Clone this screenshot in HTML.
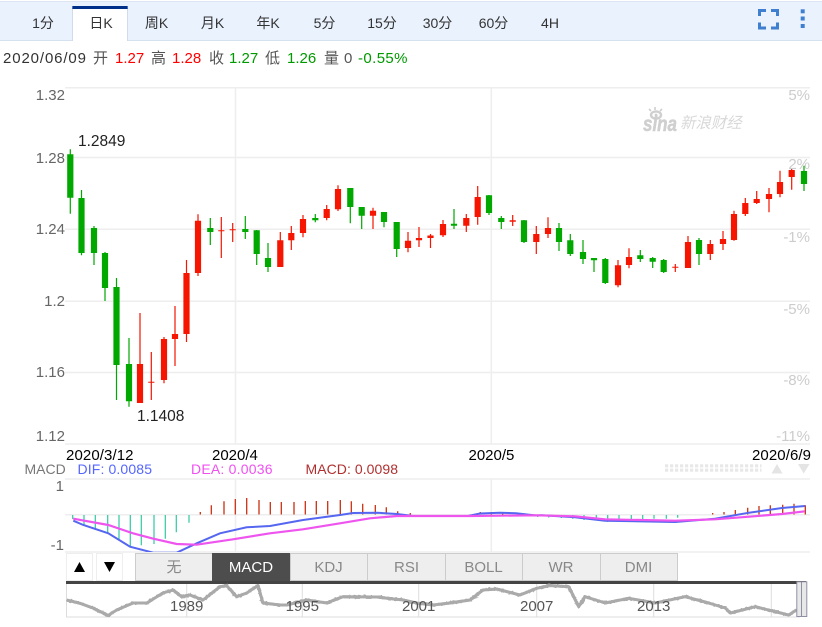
<!DOCTYPE html>
<html><head><meta charset="utf-8"><title>K</title>
<style>
html,body{margin:0;padding:0;background:#fff;width:822px;height:627px;overflow:hidden}
svg{display:block}
text{font-family:"Liberation Sans","WenQuanYi Zen Hei","Noto Sans CJK SC",sans-serif;font-size:14px}
.f15 text{font-size:15px}
.f155 text{font-size:15.5px}
</style></head><body>
<svg width="822" height="627" viewBox="0 0 822 627" xmlns="http://www.w3.org/2000/svg">
<defs>
<filter id="n" x="-2%" y="-20%" width="104%" height="140%"><feTurbulence type="fractalNoise" baseFrequency="0.35" numOctaves="2" seed="4"/><feDisplacementMap in="SourceGraphic" scale="3" xChannelSelector="R" yChannelSelector="G"/></filter>
<clipPath id="mc"><rect x="65" y="480" width="745" height="72"/></clipPath>
</defs>
<!-- toolbar -->
<rect x="0" y="1" width="822" height="40" fill="#eaf2fd"/>
<rect x="0" y="1" width="822" height="1" fill="#dce5f1"/>
<rect x="0" y="40" width="822" height="1" fill="#d6e1ef"/>
<rect x="72" y="6" width="56" height="35" fill="#fff"/>
<rect x="72" y="8" width="1" height="33" fill="#d0dcec"/><rect x="127" y="8" width="1" height="33" fill="#d0dcec"/>
<rect x="72.3" y="6" width="55.4" height="3" fill="#00308a"/>
<g fill="#333" text-anchor="middle">
<text x="43" y="28">1分</text><text x="101" y="28">日K</text><text x="156.5" y="28">周K</text><text x="212.5" y="28">月K</text><text x="268" y="28">年K</text><text x="324.5" y="28">5分</text><text x="382" y="28">15分</text><text x="437.5" y="28">30分</text><text x="493.5" y="28">60分</text><text x="550" y="28">4H</text>
</g>
<path d="M759.5 16V10.5H766M771 10.5H777.5V16M759.5 22.5V28H766M771 28H777.5V22.5" fill="none" stroke="#3f7fd0" stroke-width="3"/>
<g fill="#3f7fd0"><rect x="800.7" y="9.3" width="4" height="4"/><rect x="800.7" y="16.5" width="4" height="4"/><rect x="800.7" y="24" width="4" height="4"/></g>
<!-- info row -->
<g class="f15">
<text x="3" y="63" fill="#333" textLength="83">2020/06/09</text>
<text x="93" y="63" fill="#555">开</text><text x="115" y="63" fill="#f00">1.27</text>
<text x="151" y="63" fill="#555">高</text><text x="172" y="63" fill="#f00">1.28</text>
<text x="209" y="63" fill="#555">收</text><text x="229" y="63" fill="#090">1.27</text>
<text x="265" y="63" fill="#555">低</text><text x="287" y="63" fill="#090">1.26</text>
<text x="324" y="63" fill="#555">量</text><text x="344" y="63" fill="#555">0</text>
<text x="358" y="63" fill="#090" textLength="49.5">-0.55%</text>
</g>
<!-- grid -->
<g stroke="#eee" stroke-width="1.5" fill="none">
<path d="M65 87.7H810M65 157.5H810M65 229.3H810M65 301.3H810M65 372.5H810M65 444H810M65 479H810M65 514.7H810M65 552H810"/>
<path d="M235.5 88V444M235.5 479V552M491.3 88V444M491.3 479V552"/>
</g>
<!-- watermark -->
<g fill="#cfcfcf">
<text x="643" y="131" style="font-size:21px;font-weight:bold;font-style:italic" stroke="#cfcfcf" stroke-width=".5" textLength="34" lengthAdjust="spacingAndGlyphs">sina</text>
<text x="680" y="128" fill="#d8d8d8" style="font-size:15.4px;font-style:italic">新浪财经</text>
<ellipse cx="656" cy="115" rx="5" ry="3.6" fill="none" stroke="#cfcfcf" stroke-width="2.4"/>
<circle cx="656" cy="115" r="1.4"/>
<path d="M651 111l-2-2M655 110v-3M660 111l2-2" stroke="#cfcfcf" stroke-width="1.6"/>
</g>
<!-- axis labels -->
<g fill="#666" text-anchor="end" class="f15">
<text x="65" y="100">1.32</text><text x="65" y="163">1.28</text><text x="65" y="234">1.24</text><text x="65" y="306">1.2</text><text x="65" y="377">1.16</text><text x="65" y="441">1.12</text>
<text x="64" y="491">1</text><text x="64" y="550">-1</text>
</g>
<g fill="#ccc" text-anchor="end" class="f15">
<text x="810" y="100">5%</text><text x="810" y="169">2%</text><text x="810" y="242">-1%</text><text x="810" y="314">-5%</text><text x="810" y="385">-8%</text><text x="810" y="441">-11%</text>
</g>
<!-- green candles -->
<path fill="none" stroke="#00a800" stroke-width="1.2" d="M70.3 149.3V213.7M81.5 190V255.3M94 226V265M105 252V301M116.5 278V400M129 338V406.7M210.3 218V245M245.3 216V239M256.7 230V265M268 243V272M315.3 214V222.3M350.3 188V223.3M361.7 207V229M384 212V227.3M396.7 222V257M454 209V229M489 195V215M501.3 216V229M524 220V243M559 223V251M570.3 234V256M583 240V264M594 258V272M605.3 258V284M640.3 250V262M652.7 257V268M663.7 259V273M699 238V265M804 165.7V191"/>
<path fill="none" stroke="#00a800" stroke-width="6.2" d="M70.3 154.3V197.7M81.5 198V253M94 228V253M105 253V288M116.5 287V365M129 364V401.3M210.3 228V232M245.3 229V232M256.7 230.3V254M268 258V267M315.3 218V220.3M350.3 188V207M361.7 207V215.7M384 212V222M396.7 222V249M454 223.7V225.7M489 195.3V213M501.3 218V222M524 220.3V242M559 228V242M570.3 240.3V254M583 252V259M594 258V260.3M605.3 259V283M640.3 255.3V259M652.7 258V261.7M663.7 260V272M699 240V254M804 171V184"/>
<!-- red candles -->
<path fill="none" stroke="#f51500" stroke-width="1.2" d="M140 313V403M151.3 352V400M164 337V383.3M175 306V366M186.5 260V342M198 214.3V276M221.3 217V258M232.7 223V242M280.3 232V267M291.3 226V250M303 215V237.3M326.7 205V220.3M338 185.3V211M373 207.7V229M408 232V252.3M419 227V247M430.5 234V248M443 220V237M466.3 214V232M477.7 186V224.7M512.7 215V226M536.3 226V254M548 217.3V238M618 260V287.3M629 248.3V268.3M675.3 264V272M688 236V268M710.3 240V260M723 231V250M734 210.7V240.7M745.3 198V216M756.7 191V204M769 188V212.3M780 170.7V197.3M791.7 169V189.7"/>
<path fill="none" stroke="#f51500" stroke-width="6.2" d="M140 364V403M151.3 381.7V382.7M164 339V380M175 334V339M186.5 273V334M198 220.7V273M221.3 230.3V231.3M232.7 229.3V230.3M280.3 240.3V267M291.3 233V240.3M303 219V233M326.7 209V218M338 189V209.3M373 210.7V215.7M408 240.7V248M419 238V240.3M430.5 235.5V238M443 224V235.3M466.3 218V225.7M477.7 197V217M512.7 220.3V221.7M536.3 234V242M548 228V234M618 265.3V285.3M629 257V265M675.3 266.7V267.7M688 242V268M710.3 244V254M723 239V244M734 214V240M745.3 203V214M756.7 199V203M769 194V199M780 182V194M791.7 170V177"/>
<!-- markers -->
<g fill="#222" class="f155"><text x="78" y="146">1.2849</text><text x="137" y="421">1.1408</text></g>
<!-- date labels -->
<g fill="#000" class="f15"><text x="66" y="460" textLength="67.5">2020/3/12</text><text x="212" y="460">2020/4</text><text x="468.5" y="460">2020/5</text><text x="752" y="460" textLength="59">2020/6/9</text></g>
<!-- macd legend -->
<text x="24.5" y="474" fill="#777">MACD</text>
<text x="77.5" y="474" fill="#5566ff" textLength="74.5">DIF: 0.0085</text>
<text x="191" y="474" fill="#f050f0" textLength="81.5">DEA: 0.0036</text>
<text x="305.5" y="474" fill="#b03030" textLength="92.5">MACD: 0.0098</text>
<!-- dot widget -->
<path d="M665 465.8H761.5M665 470.2H761.5" stroke="#e8e8e8" stroke-width="3.2" stroke-dasharray="3.2 1.8" fill="none"/>
<path d="M771.5 473.5L777 464L782.5 473.5ZM798 464H809.5L803.7 473.5Z" fill="#e4e4e4"/>
<!-- macd bars -->
<g clip-path="url(#mc)">
<path fill="none" stroke="#30c8a0" stroke-width="1.2" d="M72.7 515V519M84 515V525M95.3 515V528.3M107.7 515V533.3M119 515V540M130.3 515V546M141.3 515V545.3M154 515V544M165.3 515V538.7M176.3 515V532.3M189 515V522.7M526.7 515V516M537.7 515V517M548.7 515V517.5M561.3 515V518M572.7 515V518.7M584 515V520M596.3 515V520.5M607.7 515V522M619 515V521M631.3 515V520.5M642.7 515V519.5M654 515V518.7M666.3 515V518.7M677.7 515V517.7"/>
<path fill="none" stroke="#c83010" stroke-width="1.3" d="M200.3 512V514.5M211.3 505.3V514.5M224 501.3V514.5M235.3 499V514.5M246.7 498V514.5M259 500V514.5M270.3 502V514.5M281.3 502V514.5M294 502V514.5M305.3 501V514.5M316.3 501V514.5M327.7 501V514.5M340.3 500V514.5M351.3 501.3V514.5M362.7 503.7V514.5M375.3 505V514.5M386.3 507.3V514.5M397.7 511.3V514.5M410.3 513V514.5M480.3 512V514.5M491.3 512V514.5M502.7 513V514.5M712.7 513V514.5M724 512V514.5M735.3 510V514.5M747.7 507.7V514.5M759 506V514.5M770.3 505.3V514.5M782.7 504.7V514.5M794 503.7V514.5M805.3 505.3V514.5"/>
<polyline fill="none" stroke="#5566f0" stroke-width="2" points="73.3,520.7 83.3,525 108.3,533.3 130,546.7 153.3,552.7 176.7,552.7 196.7,543.3 220,533.3 246.7,527.3 270,526 303,520 340,515 353,513 377,512.7 397,514 413,516 468,516 480,513.5 500,512.7 516,513.3 536,515.5 542,515.3 575,517.3 605,520.7 675,522 715,518.7 749,512.7 782,508 805,506"/>
<polyline fill="none" stroke="#ee55ee" stroke-width="2.2" points="73.3,518.7 108.3,525 133,533.3 153.3,538.7 176.7,544 196.7,544.7 233,539.3 270,533.3 303,529.3 340,523.3 370,518.3 397,516 470,516 536,515.3 575,516.3 605,519.3 675,520.7 715,519.3 749,516.7 782,514 805,511.3"/>
</g>
<!-- buttons -->
<rect x="66.5" y="553.5" width="26" height="27" fill="#fff" stroke="#eee"/>
<rect x="96.5" y="553.5" width="26" height="27" fill="#fff" stroke="#eee"/>
<path d="M74 572H85L79.5 562Z M104 562H115L109.5 572Z" fill="#000"/>
<g stroke="#ccc" fill="#eee">
<rect x="135.5" y="553.5" width="77" height="27"/>
<rect x="212.5" y="553.5" width="78" height="27" fill="#4d4d4d" stroke="#4d4d4d"/>
<rect x="290.5" y="553.5" width="77" height="27"/>
<rect x="367.5" y="553.5" width="78" height="27"/>
<rect x="445.5" y="553.5" width="77" height="27"/>
<rect x="522.5" y="553.5" width="78" height="27"/>
<rect x="600.5" y="553.5" width="77" height="27"/>
</g>
<g text-anchor="middle" fill="#888" class="f15">
<text x="174" y="572">无</text>
<text x="251" y="572" fill="#fff">MACD</text>
<text x="328.5" y="572">KDJ</text>
<text x="406.5" y="572">RSI</text>
<text x="483.5" y="572">BOLL</text>
<text x="561" y="572">WR</text>
<text x="638.5" y="572">DMI</text>
</g>
<!-- range bar -->
<rect x="66" y="581" width="740" height="3" fill="#444"/>
<path d="M66.5 584V617H800" fill="none" stroke="#ddd" stroke-width="1"/>
<path d="M186.7 584V617M302.3 584V617M418.7 584V617M536.7 584V617M653.7 584V617M771.3 584V617" stroke="#ddd" stroke-width="1"/>
<polyline fill="none" stroke="#aaa" stroke-width="3" stroke-linejoin="round" points="66.7,600 80,603.3 93,608 108,615.5 116.7,610 133,603 146.7,603 163,593 173,590 181.7,596.7 190,595 203,600 220,586.7 226.7,585.7 236.7,596.7 246.7,593 258,585.5 263,603 280,605 286.7,605 306.7,600 326.7,603 343,596.7 376.7,597 403,600 416.7,603 433,605 450,603 470,600 483,590 496.7,589 520,595 536.7,588.3 550,585.5 568.7,586.7 578.7,606.7 585,596.7 605.3,603 628.7,598.3 655.3,603 685.3,596.7 708.7,603 725.3,608 730.3,613 755.3,606.7 775.3,611.7 788.7,615 796.3,610"/>
<polyline filter="url(#n)" fill="none" stroke="#aaa" stroke-width="3" stroke-linejoin="round" points="66.7,600 80,603.3 93,608 108,615.5 116.7,610 133,603 146.7,603 163,593 173,590 181.7,596.7 190,595 203,600 220,586.7 226.7,585.7 236.7,596.7 246.7,593 258,585.5 263,603 280,605 286.7,605 306.7,600 326.7,603 343,596.7 376.7,597 403,600 416.7,603 433,605 450,603 470,600 483,590 496.7,589 520,595 536.7,588.3 550,585.5 568.7,586.7 578.7,606.7 585,596.7 605.3,603 628.7,598.3 655.3,603 685.3,596.7 708.7,603 725.3,608 730.3,613 755.3,606.7 775.3,611.7 788.7,615 796.3,610"/>
<g fill="#555" text-anchor="middle" class="f15">
<text x="186.7" y="611">1989</text><text x="302.3" y="611">1995</text><text x="418.7" y="611">2001</text><text x="536.7" y="611">2007</text><text x="653.7" y="611">2013</text>
</g>
<rect x="796.8" y="581.8" width="10" height="34.7" fill="#e8e8e8" stroke="#8f8fa5"/>
<path d="M801.5 582V616" stroke="#8f8fa5"/>
</svg>
</body></html>
